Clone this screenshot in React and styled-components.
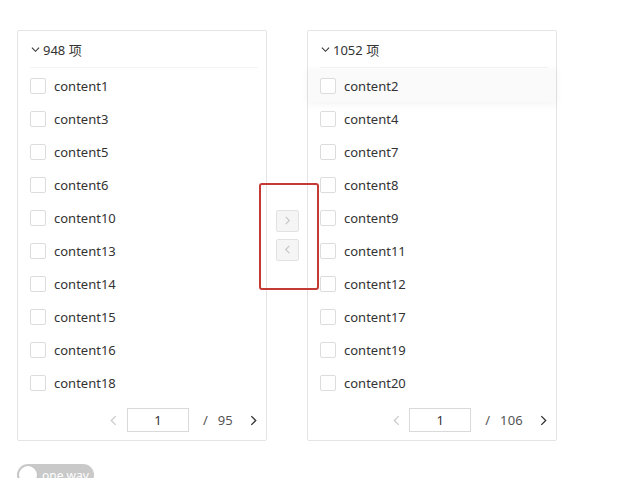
import React from "react";
import styled, { createGlobalStyle } from "styled-components";

const Global = createGlobalStyle`
  html, body { margin: 0; padding: 0; background: #fff; }
  body { font-family: "Noto Sans", "Noto Sans CJK SC", sans-serif; color: #333; overflow: hidden; }
`;

const Page = styled.div`
  padding: 30px 0 0 17px;
  width: 622px;
  height: 478px;
  box-sizing: border-box;
`;

const Transfer = styled.div`
  display: flex;
  align-items: stretch;
`;

const Panel = styled.div`
  width: 250px;
  height: 411px;
  box-sizing: border-box;
  border: 1px solid #e4e4e4;
  border-radius: 2px;
  display: flex;
  flex-direction: column;
  background: #fff;
`;

const Header = styled.div`
  height: 37px;
  margin: 0 8px 0 12px;
  display: flex;
  align-items: center;
  gap: 3px;
  font-size: 13px;
  color: #333;
  border-bottom: 1px solid #f4f4f4;
  box-sizing: border-box;
  padding-left: 1px;
`;

const List = styled.div`
  padding-top: 1px;
  display: flex;
  flex-direction: column;
`;

const Row = styled.div`
  height: 33px;
  display: flex;
  align-items: center;
  gap: 8px;
  padding-left: 12px;
  font-size: 13px;
  color: #333;
  background: ${(p) => (p.$hover ? "#fafafa" : "transparent")};
  box-shadow: ${(p) => (p.$hover ? "0 2px 8px rgba(0,0,0,0.05)" : "none")};
`;

const Box = styled.span`
  width: 16px;
  height: 16px;
  box-sizing: border-box;
  border: 1px solid #dcdcdc;
  border-radius: 2px;
  background: #fff;
`;

const Pager = styled.div`
  margin-top: auto;
  height: 40px;
  display: flex;
  align-items: center;
  justify-content: flex-end;
  padding-right: 6px;
  font-size: 13px;
  color: #555;
`;

const Arrow = styled.span`
  display: flex;
  align-items: center;
  justify-content: center;
  width: 14px;
  color: ${(p) => (p.$disabled ? "#ccc" : "#333")};
`;

const PageInput = styled.div`
  width: 62px;
  height: 24px;
  box-sizing: border-box;
  border: 1px solid #d9d9d9;
  display: flex;
  align-items: center;
  justify-content: center;
  font-size: 13px;
  color: #333;
  margin: 0 14px 0 6px;
`;

const Total = styled.span`
  margin-right: 13px;
  letter-spacing: 0.2px;
`;

const Slash = styled.span`
  margin-right: 10px;
`;

const Ops = styled.div`
  width: 40px;
  position: relative;
  display: flex;
  flex-direction: column;
  align-items: center;
  justify-content: center;
  gap: 7px;
  padding-top: 1px;
  padding-bottom: 2px;
`;

const OpButton = styled.div`
  width: 23px;
  height: 22px;
  box-sizing: border-box;
  border: 1px solid #e2e2e2;
  background: #f5f5f5;
  border-radius: 2px;
  display: flex;
  align-items: center;
  justify-content: center;
  color: #c4c4c4;
`;

const Mark = styled.div`
  position: absolute;
  left: -8px;
  top: 153px;
  width: 60px;
  height: 107px;
  box-sizing: border-box;
  border: 2px solid #c43a35;
  border-radius: 3px;
  pointer-events: none;
`;

const Switch = styled.div`
  margin-top: 23px;
  width: 77px;
  height: 22px;
  border-radius: 11px;
  background: #c9c9c9;
  display: flex;
  align-items: center;
  padding: 0 2px;
  box-sizing: border-box;
  gap: 5px;
  font-size: 12px;
  color: #fff;
`;

const Knob = styled.span`
  width: 18px;
  height: 18px;
  border-radius: 50%;
  background: #fff;
  box-shadow: 0 1px 2px rgba(0,0,0,0.15);
`;

const Chevron = ({ dir = "down", size = 9 }) => {
  const d = {
    down: "M1 3 L5 7 L9 3",
    right: "M3 1 L7 5 L3 9",
    left: "M7 1 L3 5 L7 9",
  }[dir];
  return (
    <svg width={size} height={size} viewBox="0 0 10 10" fill="none" stroke="currentColor" strokeWidth="1.2">
      <path d={d} />
    </svg>
  );
};

const left = [1, 3, 5, 6, 10, 13, 14, 15, 16, 18];
const right = [2, 4, 7, 8, 9, 11, 12, 17, 19, 20];

const TransferPanel = ({ count, items, total, hoverFirst }) => (
  <Panel>
    <Header>
      <Chevron dir="down" size={9} />
      <span>{count} 项</span>
    </Header>
    <List>
      {items.map((n, i) => (
        <Row key={n} $hover={hoverFirst && i === 0}>
          <Box />
          <span>content{n}</span>
        </Row>
      ))}
    </List>
    <Pager>
      <Arrow $disabled><Chevron dir="left" size={11} /></Arrow>
      <PageInput>1</PageInput>
      <Slash>/</Slash>
      <Total>{total}</Total>
      <Arrow><Chevron dir="right" size={11} /></Arrow>
    </Pager>
  </Panel>
);

export default function App() {
  return (
    <Page>
      <Global />
      <Transfer>
        <TransferPanel count={948} items={left} total={95} />
        <Ops>
          <OpButton><Chevron dir="right" size={9} /></OpButton>
          <OpButton><Chevron dir="left" size={9} /></OpButton>
          <Mark />
        </Ops>
        <TransferPanel count={1052} items={right} total={106} hoverFirst />
      </Transfer>
      <Switch>
        <Knob />
        <span>one way</span>
      </Switch>
    </Page>
  );
}
